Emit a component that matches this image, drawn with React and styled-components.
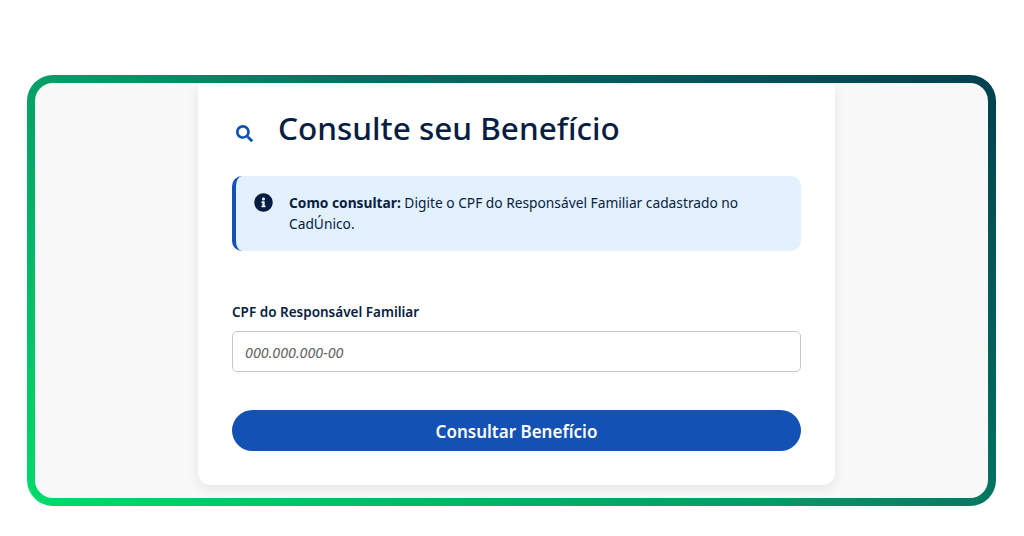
import React from "react";
import styled, { createGlobalStyle } from "styled-components";
import { FaSearch, FaInfoCircle } from "react-icons/fa";

const GlobalStyle = createGlobalStyle`
  html, body {
    margin: 0;
    padding: 0;
    background: #fff;
    font-family: "Noto Sans", "Open Sans", Arial, sans-serif;
  }
  * { box-sizing: border-box; }
`;

const Page = styled.div`
  width: 1024px;
  height: 536px;
  padding: 75px 28px 30px 27px;
  overflow: hidden;
`;

const Frame = styled.div`
  height: 431px;
  border: 8px solid transparent;
  border-radius: 26px;
  background:
    linear-gradient(#f8f8f8, #f8f8f8) padding-box,
    linear-gradient(32deg, #00db6b 0%, #059a66 45%, #006f60 62%, #00404f 100%) border-box;
  display: flex;
  justify-content: center;
  overflow: hidden;
`;

const Card = styled.main`
  width: 637px;
  height: 402px;
  margin-left: 10px;
  background: #fff;
  border-radius: 0 0 12px 12px;
  box-shadow: 0 4px 12px rgba(0, 0, 0, 0.08);
  padding: 25px 34px 0;
`;

const Heading = styled.div`
  display: flex;
  align-items: center;
  height: 40px;
`;

const SearchIcon = styled(FaSearch)`
  width: 17px;
  height: 17px;
  margin: 11px 25px 0 4px;
  color: #1351b4;
`;

const Title = styled.h1`
  margin: 0;
  font-size: 31.5px;
  line-height: 40px;
  font-weight: 500;
  color: #071d41;
`;

const Notice = styled.div`
  display: flex;
  margin-top: 28px;
  width: 569px;
  height: 75px;
  padding: 16px 40px 0 19px;
  gap: 16px;
  background: #e3f0fd;
  border-left: 4px solid #1351b4;
  border-radius: 10px;
  color: #071d41;
  font-size: 13.75px;
  line-height: 21px;
`;

const InfoIcon = styled(FaInfoCircle)`
  flex: none;
  width: 19px;
  height: 19px;
  margin: 1px 0 0 -1px;
`;

const NoticeText = styled.p`
  margin: 0;
  strong { font-weight: 700; }
`;

const Label = styled.label`
  display: block;
  margin-top: 51px;
  font-size: 13.5px;
  line-height: 20px;
  font-weight: 600;
  color: #071d41;
`;

const CpfInput = styled.input`
  display: block;
  width: 569px;
  height: 41px;
  margin-top: 9px;
  padding: 2px 12px 0;
  border: 1px solid #c8c8c8;
  border-radius: 5px;
  background: #fff;
  font-family: inherit;
  font-size: 14.3px;
  font-style: italic;
  color: #555;
  &::placeholder {
    color: #636363;
    opacity: 1;
  }
`;

const SubmitButton = styled.button`
  display: block;
  width: 569px;
  height: 41px;
  margin-top: 38px;
  padding: 2px 0 0;
  border: 0;
  border-radius: 21px;
  background: #1351b4;
  color: #fff;
  font-family: inherit;
  font-size: 17px;
  font-weight: 600;
`;

export default function App() {
  return (
    <>
      <GlobalStyle />
      <Page>
        <Frame>
          <Card>
            <Heading>
              <SearchIcon />
              <Title>Consulte seu Benefício</Title>
            </Heading>
            <Notice>
              <InfoIcon />
              <NoticeText>
                <strong>Como consultar:</strong> Digite o CPF do Responsável Familiar cadastrado no CadÚnico.
              </NoticeText>
            </Notice>
            <Label htmlFor="cpf">CPF do Responsável Familiar</Label>
            <CpfInput id="cpf" placeholder="000.000.000-00" />
            <SubmitButton>Consultar Benefício</SubmitButton>
          </Card>
        </Frame>
      </Page>
    </>
  );
}
